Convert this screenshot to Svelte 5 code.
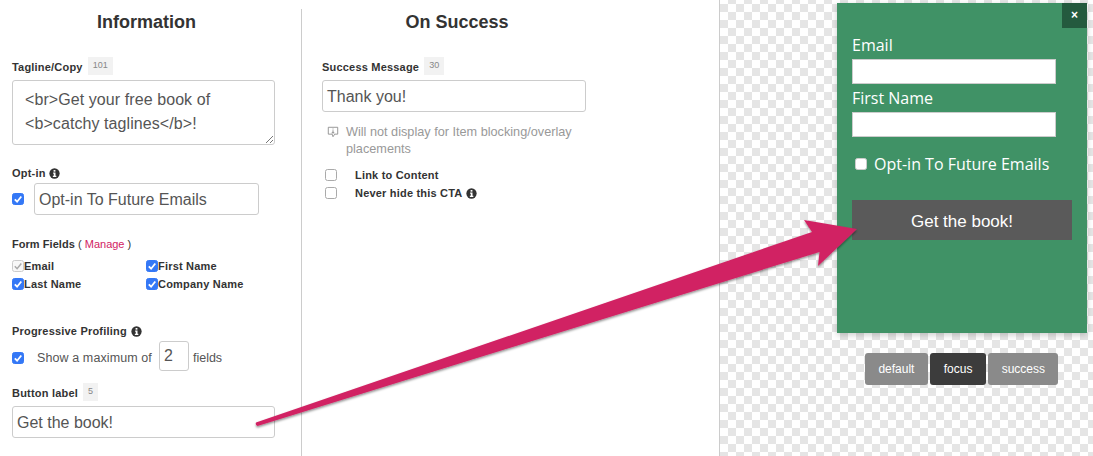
<script lang="ts">
  let fields = [
    { name: 'Email', locked: true },
    { name: 'First Name', locked: false },
    { name: 'Last Name', locked: false },
    { name: 'Company Name', locked: false }
  ];
  let tabs = ['default', 'focus', 'success'];
  let active = 'focus';
</script>

{#snippet info()}
  <svg class="info" viewBox="0 0 12 12" aria-hidden="true">
    <circle cx="6" cy="6" r="5.6" fill="#333" />
    <rect x="5" y="2.2" width="2" height="1.8" fill="#fff" />
    <path d="M4.5 5h2.6v3.5h.9V9.8H4.2V8.5h1V6.2h-.7z" fill="#fff" />
  </svg>
{/snippet}

{#snippet tick(on)}
  <span class="check" class:on>
    {#if on}
      <svg viewBox="0 0 12 12"><path d="M2.8 6.3l2.3 2.4 4.2-5.2" fill="none" stroke="#fff" stroke-width="1.8" /></svg>
    {/if}
  </span>
{/snippet}

<div class="page">
  <section class="col info-col">
    <h2>Information</h2>
    <div class="label counted first-counted">Tagline/Copy <span class="count">101</span></div>
    <div class="area">
      <div>&lt;br&gt;Get your free book of</div>
      <div>&lt;b&gt;catchy taglines&lt;/b&gt;!</div>
      <svg class="grip" viewBox="0 0 8 8"><path d="M1 8L8 1M5 8l3-3" stroke="#777" fill="none" /></svg>
    </div>

    <div class="label optin-label">Opt-in {@render info()}</div>
    <div class="optin-row">
      {@render tick(true)}
      <div class="field optin-field">Opt-in To Future Emails</div>
    </div>

    <div class="label fields-label">Form Fields <span class="paren">( <span class="link">Manage</span> )</span></div>
    <div class="field-grid">
      {#each fields as f}
        <div class="label opt">
          {#if f.locked}
            <span class="check locked"><svg viewBox="0 0 12 12"><path d="M2.8 6.3l2.3 2.4 4.2-5.2" fill="none" stroke="#aaa" stroke-width="1.5" /></svg></span>
          {:else}
            {@render tick(true)}
          {/if}
          {f.name}
        </div>
      {/each}
    </div>

    <div class="label prog-label">Progressive Profiling {@render info()}</div>
    <div class="prog-row">
      {@render tick(true)}
      <span class="prog-text">Show a maximum of</span>
      <span class="num">2</span>
      <span class="prog-fields">fields</span>
    </div>

    <div class="label counted button-label">Button label <span class="count">5</span></div>
    <div class="field button-field">Get the book!</div>
  </section>

  <section class="col success-col">
    <h2>On Success</h2>
    <div class="label counted first-counted">Success Message <span class="count">30</span></div>
    <div class="field success-field">Thank you!</div>
    <div class="note">
      <svg class="note-icon" viewBox="0 0 14 14" aria-hidden="true">
        <path d="M1.5 1.5h11v8H9l-2 3-1-3H1.5z" fill="none" stroke="#888" />
        <path d="M7 3v1M7 5v3M5.5 8h3" stroke="#777" fill="none" />
      </svg>
      <span>Will not display for Item blocking/overlay placements</span>
    </div>
    <div class="label plain first">{@render tick(false)}<span>Link to Content</span></div>
    <div class="label plain">{@render tick(false)}<span>Never hide this CTA</span> {@render info()}</div>
  </section>

  <section class="preview">
    <div class="popup">
      <div class="close">×</div>
      <div class="popup-label email">Email</div>
      <div class="popup-input"></div>
      <div class="popup-label name">First Name</div>
      <div class="popup-input"></div>
      <div class="popup-opt"><span class="popup-check"></span>Opt-in To Future Emails</div>
      <div class="popup-btn">Get the book!</div>
    </div>
    <div class="tabs">
      {#each tabs as t}
        <div class="tab" class:active={t === active}>{t}</div>
      {/each}
    </div>
  </section>

  <svg class="arrow" viewBox="0 0 1093 456" aria-hidden="true">
    <defs>
      <filter id="sh" x="-5%" y="-20%" width="110%" height="140%">
        <feDropShadow dx="0" dy="1.5" stdDeviation="1.2" flood-color="#000" flood-opacity="0.45" />
      </filter>
    </defs>
    <path
      d="M256 422.6 L812 232 L804 220 L857 229 L818 266 L819.5 252 L257.5 426 Q255 425 256 422.6z"
      fill="#d12363"
      filter="url(#sh)"
    />
  </svg>
</div>

<style>
  :global(body) {
    margin: 0;
    background: #fff;
  }

  .page {
    position: relative;
    width: 1093px;
    height: 456px;
    overflow: hidden;
    display: flex;
    font-family: "Liberation Sans", Arial, sans-serif;
    color: #333;
  }

  .col {
    box-sizing: border-box;
    flex: none;
  }

  .info-col {
    width: 302px;
    height: 456px;
    padding-left: 12px;
    position: relative;
  }

  .info-col::after {
    content: '';
    position: absolute;
    right: 0;
    top: 9px;
    bottom: 0;
    width: 1px;
    background: #ccc;
  }

  .success-col {
    width: 417px;
    padding-left: 20px;
  }

  h2 {
    margin: 12px 0 0;
    font-size: 18px;
    line-height: 20px;
    font-weight: 700;
    color: #333;
    text-align: center;
  }

  .info-col h2 { width: 269px; }
  .success-col h2 { width: 270px; }

  .label {
    font-size: 11px;
    font-weight: 700;
    line-height: 14px;
    letter-spacing: 0.2px;
    color: #333;
  }

  .counted {
    display: flex;
    align-items: flex-end;
    gap: 5px;
    height: 18px;
    line-height: 16px;
  }

  .first-counted {
    margin-top: 25px;
  }

  .count {
    display: inline-block;
    min-width: 15px;
    padding: 0 5px;
    box-sizing: border-box;
    height: 18px;
    line-height: 16px;
    font-size: 9px;
    font-weight: 400;
    letter-spacing: 0;
    text-align: center;
    color: #888;
    background: #f2f2f2;
  }

  .area {
    position: relative;
    box-sizing: border-box;
    width: 263px;
    height: 65px;
    margin-top: 5px;
    padding: 7px 12px;
    border: 1px solid #ccc;
    border-radius: 3px;
    font-size: 16px;
    line-height: 24px;
    letter-spacing: 0.08px;
    color: #555;
  }

  .grip {
    position: absolute;
    right: 1px;
    bottom: 1px;
    width: 8px;
    height: 8px;
  }

  .field {
    box-sizing: border-box;
    height: 32px;
    border: 1px solid #ccc;
    border-radius: 3px;
    font-size: 16px;
    line-height: 31px;
    color: #555;
  }

  .optin-label {
    display: flex;
    align-items: center;
    gap: 3px;
    margin-top: 21px;
  }

  .info {
    width: 11px;
    height: 11px;
    flex: none;
    vertical-align: -1px;
  }

  .optin-row {
    display: flex;
    align-items: center;
    gap: 10px;
    margin-top: 3px;
  }

  .optin-field {
    width: 225px;
    padding-left: 4px;
  }

  .check {
    display: inline-block;
    box-sizing: border-box;
    flex: none;
    width: 12px;
    height: 12px;
    border-radius: 2.5px;
    border: 1px solid #aaa;
    background: #fff;
  }

  .check svg {
    display: block;
    width: 12px;
    height: 12px;
    margin: -1px;
  }

  .check.on {
    background: #3478f6;
    border-color: #3478f6;
  }

  .check.locked {
    border-color: #ccc;
    background: #f8f8f8;
  }

  .fields-label {
    margin-top: 22px;
    letter-spacing: 0.05px;
  }

  .paren {
    font-weight: 400;
    letter-spacing: 0;
  }

  .link {
    color: #d12363;
  }

  .field-grid {
    display: grid;
    grid-template-columns: 134px 1fr;
    row-gap: 4px;
    margin-top: 8px;
  }

  .opt {
    display: flex;
    align-items: center;
    gap: 0;
  }

  .prog-label {
    display: flex;
    align-items: center;
    gap: 4px;
    margin-top: 33px;
  }

  .prog-row {
    display: flex;
    align-items: center;
    margin-top: 3px;
    height: 34px;
    font-size: 12.5px;
    color: #555;
  }

  .prog-text {
    margin-left: 13px;
    letter-spacing: 0.1px;
  }

  .num {
    align-self: flex-start;
    box-sizing: border-box;
    width: 30px;
    height: 30px;
    margin-left: 7px;
    padding-left: 4px;
    border: 1px solid #ccc;
    border-radius: 3px;
    font-size: 16px;
    line-height: 28px;
  }

  .prog-fields {
    margin-left: 4px;
  }

  .button-label {
    margin-top: 8px;
  }

  .button-field {
    width: 263px;
    margin-top: 5px;
    padding-left: 4px;
  }

  .success-field {
    width: 264px;
    margin-top: 5px;
    padding-left: 4px;
  }

  .note {
    display: flex;
    width: 262px;
    margin-top: 12px;
    padding-left: 5px;
    box-sizing: border-box;
    gap: 7px;
    font-size: 12.7px;
    line-height: 17px;
    color: #999;
  }

  .note-icon {
    flex: none;
    width: 12px;
    height: 12px;
    margin-top: 2px;
  }

  .plain {
    display: flex;
    align-items: center;
    height: 18px;
    padding-left: 3px;
  }

  .plain .check {
    margin-right: 18px;
  }

  .plain .info {
    margin-left: 3px;
  }

  .plain.first {
    margin-top: 8px;
  }

  .preview {
    position: relative;
    flex: 1;
    box-sizing: border-box;
    padding: 3px 0 0 117px;
    border-left: 1px solid #ccc;
    background-color: #fff;
    background-image: conic-gradient(#e5e5e5 25%, #fff 0 50%, #e5e5e5 0 75%, #fff 0);
    background-size: 16px 16px;
    background-position: 0 -4px;
  }

  .popup {
    position: relative;
    box-sizing: border-box;
    width: 250px;
    height: 330px;
    padding: 31px 15px 0;
    background: #409266;
    box-shadow: 0 2px 6px rgba(0, 0, 0, 0.2);
    font-family: "Open Sans", sans-serif;
    color: #fff;
  }

  .close {
    position: absolute;
    top: 0;
    right: 0;
    width: 25px;
    height: 25px;
    background: #245a3e;
    font-family: "Liberation Sans", sans-serif;
    font-weight: 700;
    font-size: 12px;
    line-height: 25px;
    text-align: center;
  }

  .popup-label {
    font-size: 16px;
    line-height: 22px;
    height: 22px;
  }

  .popup-label.name { margin-top: 3px; }

  .popup-input {
    box-sizing: border-box;
    width: 204px;
    height: 25px;
    margin-top: 3px;
    background: #fff;
    border: 1px solid #ccc;
  }

  .popup-opt {
    display: flex;
    align-items: center;
    margin-top: 15px;
    height: 24px;
    font-size: 16px;
    padding-left: 3px;
  }

  .popup-check {
    flex: none;
    width: 12px;
    height: 12px;
    margin-right: 7px;
    background: #fff;
    border-radius: 2.5px;
    border: 1px solid #ccc;
    box-sizing: border-box;
  }

  .popup-btn {
    width: 220px;
    height: 40px;
    margin-top: 24px;
    background: #5a5a5a;
    font-family: "Liberation Sans", sans-serif;
    font-size: 17px;
    line-height: 43px;
    text-align: center;
  }

  .tabs {
    display: flex;
    gap: 2.5px;
    margin: 20px 0 0 28px;
  }

  .tab {
    box-sizing: border-box;
    height: 32px;
    padding: 0 13.4px;
    border-radius: 3px;
    background: #8a8a8a;
    color: #fff;
    font-size: 12px;
    line-height: 32px;
  }

  .tab.active {
    background: #3c3c3c;
  }

  .arrow {
    position: absolute;
    inset: 0;
    width: 1093px;
    height: 456px;
    pointer-events: none;
  }
</style>
